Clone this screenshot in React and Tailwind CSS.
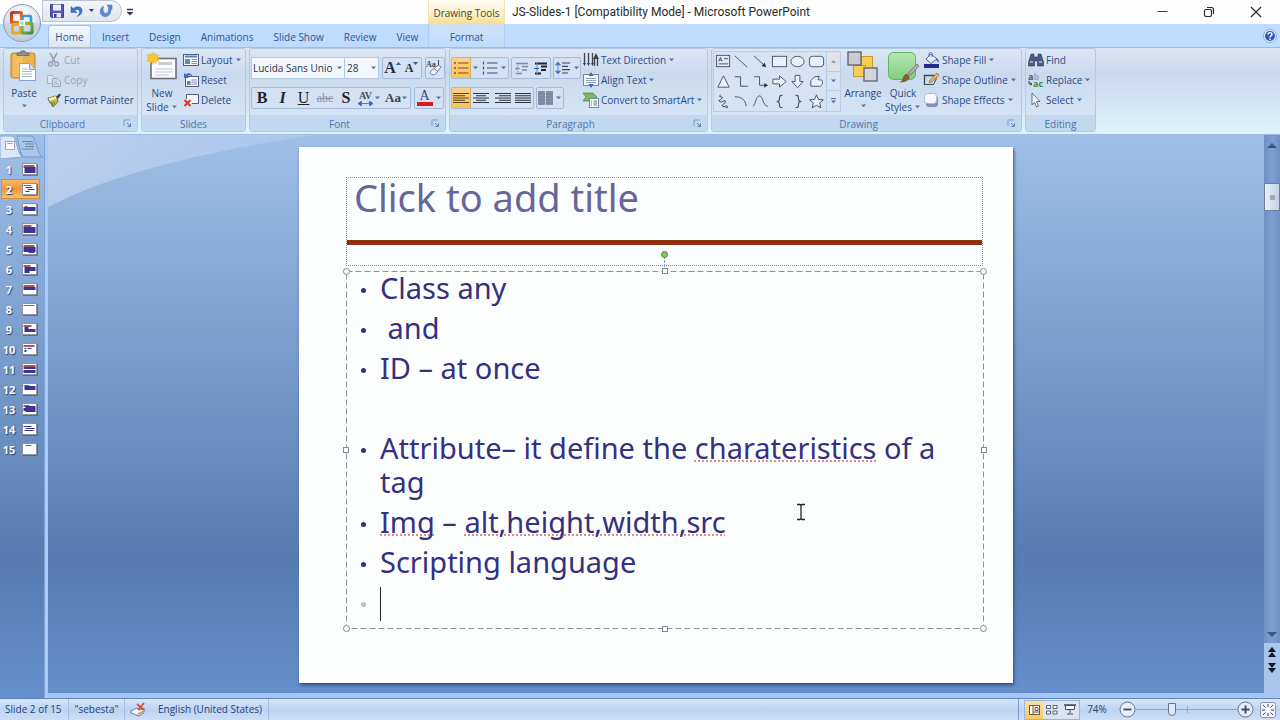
import React from "react";

/* ---------- small shared pieces ---------- */

function Caret({ className = "" }) {
  return (
    <svg width="7" height="4" viewBox="0 0 7 4" className={"shrink-0 " + className} aria-hidden="true">
      <path d="M1 .5h5L3.500 3.200z" fill="#5472a0" />
    </svg>
  );
}

function Launcher({ label }) {
  return (
    <button aria-label={label} className="mr-1 flex h-3 w-3 items-center justify-center">
      <svg width="9" height="9" viewBox="0 0 9 9" fill="none" aria-hidden="true">
        <path d="M1 7V1h6" stroke="#7f9cc4" />
        <path d="M4 4l3 3M7.500 4.500v3h-3" stroke="#5f7fae" />
      </svg>
    </button>
  );
}

function Group({ title, launcher, className, children }) {
  return (
    <section
      aria-label={title}
      className={
        "flex shrink-0 flex-col overflow-hidden rounded-[3px] border border-[#b3cae6] bg-linear-to-b from-[#dde7f4] via-[#c9daee] via-30% to-[#d8e8f8] " +
        className
      }
    >
      <div className="flex flex-1">{children}</div>
      <div className="flex h-4 items-center bg-[#c1d8f0]">
        <h2 className="flex-1 pt-[2px] text-center text-[10px] leading-[14px] text-[#5274a8]">{title}</h2>
        {launcher && <Launcher label={title + " options"} />}
      </div>
    </section>
  );
}

function Cmd({ icon, label, caret, disabled }) {
  return (
    <button
      disabled={disabled}
      className={
        "flex h-5 items-center gap-[2px] text-[10px] leading-none whitespace-nowrap " +
        (disabled ? "text-[#9aa5b5]" : "text-[#2b4a86]")
      }
    >
      {icon}
      <span>{label}</span>
      {caret && <Caret />}
    </button>
  );
}

function Box({ className = "", children }) {
  return (
    <div className={"flex h-[22px] items-stretch overflow-hidden rounded-[2px] border border-[#a4bbdc] bg-[#d3e1f2] " + className}>
      {children}
    </div>
  );
}

function Tool({ label, active, className = "", children }) {
  return (
    <button
      aria-label={label}
      className={
        "flex items-center justify-center " +
        (active ? "bg-linear-to-b from-[#fbd08b] to-[#fbc253] ring-1 ring-[#d3a95a] " : "") +
        className
      }
    >
      {children}
    </button>
  );
}

function Svg({ w = 16, h = 16, vb, children }) {
  return (
    <svg width={w} height={h} viewBox={vb || `0 0 ${w} ${h}`} fill="none" className="shrink-0" aria-hidden="true">
      {children}
    </svg>
  );
}

/* ---------- icons ---------- */

const OfficeLogo = () => (
  <Svg w={40} h={40}>
    <defs>
      <radialGradient id="orb" cx=".5" cy=".3" r=".75">
        <stop offset="0" stopColor="#ffffff" />
        <stop offset=".55" stopColor="#dfe5ee" />
        <stop offset="1" stopColor="#aab8cc" />
      </radialGradient>
      <linearGradient id="lr" x1="0" y1="0" x2="1" y2="1">
        <stop offset="0" stopColor="#c8321c" />
        <stop offset="1" stopColor="#f08a2a" />
      </linearGradient>
      <linearGradient id="lg" x1="0" y1="0" x2="1" y2="1">
        <stop offset="0" stopColor="#a9c43a" />
        <stop offset="1" stopColor="#3f8f35" />
      </linearGradient>
    </defs>
    <circle cx="20" cy="20" r="18.500" fill="url(#orb)" stroke="#8d9db5" />
    <path d="M3 21a17 17 0 0 0 34 0c-8-4-26-4-34 0z" fill="#c3cfe0" opacity=".7" />
    <rect x="9.500" y="9.500" width="10" height="10" rx="1" stroke="url(#lr)" strokeWidth="3.200" />
    <rect x="20.500" y="13" width="8.500" height="7.500" rx="1" stroke="#3b9bd8" strokeWidth="2.600" />
    <rect x="10.500" y="21.500" width="8" height="8.500" rx="1" stroke="#efa61f" strokeWidth="2.800" />
    <rect x="20" y="20.500" width="10" height="9.500" rx="1" stroke="url(#lg)" strokeWidth="3" />
    <path d="M17 17h6v6h-6z" fill="#eef6fb" />
    <path d="M18 20h4M20 18v4" stroke="#8fc4e6" />
  </Svg>
);

const SaveIcon = () => (
  <Svg w={16} h={16}>
    <path d="M1.500 1.500h13v13h-12l-1-1z" fill="#5a58b4" stroke="#403f92" />
    <rect x="4" y="1.500" width="8" height="6" fill="#eef1fb" />
    <rect x="4" y="10" width="8" height="4.500" fill="#dfe3f2" />
    <rect x="5" y="11" width="2.500" height="3.500" fill="#403f92" />
  </Svg>
);

const UndoIcon = () => (
  <Svg w={14} h={14}>
    <path d="M1 2.500v6h6l-2-2c2-2 5-1 4.500 2-.2 1.500-1 2.500-2.500 4 4-1.500 5.500-4 5-6.500C11.500 2.500 7 1.500 3.200 4.600z" fill="#4472cf" stroke="#2f57ab" strokeWidth=".5" />
  </Svg>
);

const RedoIcon = () => (
  <Svg w={14} h={14}>
    <path d="M8 1h5v5l-1.600-1.400C12.600 8 11 12 7 12.500 2.500 13 .5 9 1.500 5.500c.6-1.600 1.500-2.500 3-3.300C3.500 6 4 9.300 6.800 9.300c2.500 0 3.200-3 2.600-6.400z" fill="#5b8ad8" stroke="#3563b8" strokeWidth=".5" />
  </Svg>
);

const PasteIcon = () => (
  <Svg w={28} h={32}>
    <rect x="1" y="3" width="24" height="25" rx="2" fill="#eeb24c" stroke="#b98332" />
    <path d="M3 5h10v22H3z" fill="#f5c871" opacity=".6" />
    <path d="M7 5V3h3c0-3 6-3 6 0h3v2.500H7z" fill="#8b8f97" stroke="#5d6069" strokeWidth=".7" />
    <path d="M9.500 13.500h10l6 6v11h-16z" fill="#fbfcff" stroke="#8fa3c8" />
    <path d="M19.500 13.500v6h6" fill="#d5dff0" stroke="#8fa3c8" />
    <path d="M12 19h6M12 21.500h10M12 24h10M12 26.500h10" stroke="#a8b6d0" />
  </Svg>
);

const CutIcon = () => (
  <Svg>
    <path d="M4 1l5 9M11 1L6 10" stroke="#9aa5b4" strokeWidth="1.600" />
    <circle cx="4.500" cy="12" r="2" stroke="#9aa5b4" strokeWidth="1.400" />
    <circle cx="10.500" cy="12" r="2" stroke="#9aa5b4" strokeWidth="1.400" />
  </Svg>
);

const CopyIcon = () => (
  <Svg>
    <path d="M1.500 3.500h5l2 2v6h-7z" fill="#dde4ee" stroke="#a9b4c6" />
    <path d="M6.500 6.500h5l3 3v5h-8z" fill="#d3dbe8" stroke="#9ca9be" />
    <path d="M8 10h3M8 12h5" stroke="#a9b4c6" />
  </Svg>
);

const PainterIcon = () => (
  <Svg>
    <path d="M2 6l8-2 2 5c-2 4-4 5-5 6-1-3-4-4-5-9z" fill="#b9bf4a" stroke="#6d6f2e" />
    <path d="M2.500 6.200L10 4l.8 2.400L4 9z" fill="#f4efb0" />
    <path d="M10 5l3.500-3.500 1.500 1.200L11.800 7z" fill="#3e4046" />
    <path d="M5.500 10l1.500 4M8 9.500l.5 3" stroke="#6d6f2e" />
  </Svg>
);

const Burst = () => <path d="M6 0l1 3 2-2 .2 2.600L12 3l-2 2.200 2.500.8L10 7l2 2.500-2.800-.6L9 12 7 9.500 6 12.500 5 9.500 3 12V9L0 9.500 2 7-.5 6 2 5 0 2.500l3 .8L3 1l2 2z" fill="#f7c92d" stroke="#e3a917" strokeWidth=".4" />;

const NewSlideIcon = () => (
  <Svg w={30} h={30}>
    <rect x="4" y="6.500" width="25" height="20" fill="#fdfdff" stroke="#6a6f7c" strokeWidth="1.600" />
    <rect x="11" y="10" width="14" height="3" fill="#c9cdd6" />
    <path d="M8 17h18M8 20h18M8 23h14" stroke="#c0c6d4" />
    <Burst />
  </Svg>
);

const LayoutIcon = () => (
  <Svg>
    <rect x=".5" y="2.500" width="15" height="11" fill="#f6f9ff" stroke="#4f5f80" />
    <path d="M2 4.500h12" stroke="#5a7fb9" strokeWidth="2" />
    <rect x="2" y="7" width="5" height="5" fill="#6b86b5" />
    <path d="M8.500 7.500H14M8.500 9.500H14M8.500 11.500H14" stroke="#8494b4" />
  </Svg>
);

const ResetIcon = () => (
  <Svg>
    <rect x="2.500" y="4.500" width="13" height="10" fill="#f6f9ff" stroke="#4f5f80" />
    <path d="M8.500 8H14M8.500 10H14M8.500 12H14" stroke="#8494b4" />
    <rect x="4" y="9" width="3.500" height="4" fill="#6b86b5" />
    <path d="M1 6V1l1.800 1.500C5 0 9 1 9.500 5 7.500 2.500 5.500 3 4.200 4.200L6 6z" fill="#3c67c4" />
  </Svg>
);

const DeleteIcon = () => (
  <Svg>
    <path d="M3.500 7V2.500h12v9H9" fill="#f3f6fc" stroke="#4f5f80" />
    <path d="M1.500 8l6 6M7.500 8l-6 6" stroke="#d93a27" strokeWidth="2" />
  </Svg>
);

const ClearFormatIcon = () => (
  <Svg w={18} h={18}>
    <text x="0" y="8" fontSize="8" fontFamily="Liberation Serif, serif" fontWeight="bold" fill="#454b5c">Aa</text>
    <path d="M12.500 1v8" stroke="#454b5c" />
    <path d="M5 12l6-5c1.500-1 3 0 4 1l-5.500 7c-1.500 1-3.500 1-4.500 0-1-.800-1-2 0-3z" fill="#f4f6fb" stroke="#6c7c9b" />
    <path d="M8 9.500l4 3" stroke="#6c7c9b" />
  </Svg>
);

const Lines = ({ rows, color = "#2c3342" }) => (
  <Svg w={16} h={12}>
    {rows.map(([x, w], i) => (
      <path key={i} d={`M${x} ${1.5 + i * 2.25}h${w}`} stroke={color} strokeWidth="1.200" />
    ))}
  </Svg>
);

const BulletsIcon = ({ numbered }) => (
  <Svg w={16} h={14}>
    {[2, 7, 12].map((y) => (
      <g key={y}>
        {numbered ? <path d={`M1.500 ${y - 1.5}v3`} stroke="#35579b" strokeWidth="1.200" /> : <circle cx="2" cy={y} r="1.200" fill="#b2702a" />}
        <path d={`M5 ${y}h10.500`} stroke={numbered ? "#3f4d69" : "#73501f"} strokeWidth="1.200" />
      </g>
    ))}
  </Svg>
);

const IndentIcon = ({ strong }) => (
  <Svg w={15} h={13}>
    <path d="M2 1.500h12M2 11.500h6M8 4.500h6M8 8h5" stroke={strong ? "#1e2430" : "#7c89a3"} strokeWidth={strong ? 2 : 1.4} />
    <path d={strong ? "M1 6.500h4M3.500 4.500l2 2-2 2" : "M6 6.500H2M3.500 4.500l-2 2 2 2"} stroke={strong ? "#2c5bb5" : "#7c9ad0"} />
    <path d="M4 1v11" stroke="#8d9bb5" strokeDasharray="1 1" />
  </Svg>
);

const SpacingIcon = () => (
  <Svg w={16} h={14}>
    <path d="M3 1L.5 4h5zM3 13L.5 10h5zM3 3v8" fill="#4a77c8" stroke="#4a77c8" strokeWidth=".8" />
    <path d="M7 2h8M7 5.300h6M7 8.600h8M7 12h6" stroke="#3c4659" strokeWidth="1.200" />
  </Svg>
);

const ColumnsIcon = () => (
  <Svg w={15} h={14}>
    <path d="M0 0h7v14H0zM8 0h7v14H8z" fill="#8390a6" />
    <path d="M0 3h15M0 6h15M0 9h15M0 12h15" stroke="#6d7a92" strokeWidth=".6" />
  </Svg>
);

const TextDirIcon = () => (
  <Svg>
    <path d="M1.500 1v11M5.500 1v11M9.500 1v11" stroke="#3d4452" strokeWidth="1.300" />
    <path d="M0 11h3l-1.500 3zM4 11h3l-1.500 3zM8 11h3l-1.500 3z" fill="#3d4452" />
    <path d="M13 1l-3 6h6z" fill="#3d4452" />
    <path d="M11.500 7v7M14.500 7v7" stroke="#3d4452" strokeWidth="1.300" />
  </Svg>
);

const AlignTextIcon = () => (
  <Svg>
    <rect x=".5" y="2.500" width="15" height="11" fill="#f4f8ff" stroke="#7688aa" />
    <path d="M3 6.500h10M3 8.500h10M3 10.500h10" stroke="#8f9dba" />
    <path d="M8 0l2.500 4h-5zM8 16l2.500-4h-5z" fill="#3f6ab8" />
  </Svg>
);

const SmartArtIcon = () => (
  <Svg>
    <path d="M0 1h10l4 4-4 4H0l3-4z" fill="#7fb660" stroke="#568d3a" strokeWidth=".8" />
    <rect x="6.500" y="6.500" width="9" height="9" fill="#f4f8ff" stroke="#7688aa" />
    <path d="M8 9h1M8 11h1M8 13h1M10.500 9H14M10.500 11H14M10.500 13H14" stroke="#5b8a45" />
  </Svg>
);

const shapeDrawings = [
  ["Text box", <g key="a"><rect x="1.500" y="2.500" width="14" height="12" fill="#dfe9f6" stroke="#4a5366" /><path d="M4 9l1.800-4.500L7.600 9M4.600 7.500h2.400M9.500 6H14M4 11.500h10" stroke="#4a5366" /></g>],
  ["Line", <path key="b" d="M2 3l13 12" stroke="#4a5366" />],
  ["Arrow", <g key="c"><path d="M2 3l11 10" stroke="#4a5366" /><path d="M15 15l-5-1.200 3.500-3.800z" fill="#2f3747" /></g>],
  ["Rectangle", <rect key="d" x="1.500" y="3.500" width="15" height="11" fill="#e8f1fa" stroke="#4a5366" />],
  ["Ellipse", <ellipse key="e" cx="9" cy="9" rx="7" ry="5.500" fill="#e8f1fa" stroke="#4a5366" />],
  ["Rounded rectangle", <rect key="f" x="1.500" y="3.500" width="15" height="11" rx="3" fill="#e8f1fa" stroke="#4a5366" />],
  ["Triangle", <path key="g" d="M9 3l6 12H3z" fill="#eaf2fb" stroke="#4a5366" />],
  ["Elbow", <path key="h" d="M2 4h6v10h8" stroke="#4a5366" />],
  ["Elbow arrow", <g key="i"><path d="M2 4h6v9h6" stroke="#4a5366" /><path d="M17 13l-4-2.500v5z" fill="#2f3747" /></g>],
  ["Right arrow", <path key="j" d="M2 6.500h7V3l7 6-7 6v-3.500H2z" fill="#eaf2fb" stroke="#4a5366" />],
  ["Down arrow", <path key="k" d="M6.500 2.500V9H3l6 6.500L15 9h-3.500V2.500z" fill="#eaf2fb" stroke="#4a5366" />],
  ["Freeform", <path key="l" d="M3 14V8l4-4 5-.5-1.500 3.500 4 .5c2 2 .5 6-2 6.500z" fill="#eaf2fb" stroke="#4a5366" />],
  ["Scribble", <path key="m" d="M6 2c-4 3 4 1 1 4s-4 1-2 3 6-3 6 0-5 3-3 5 4-2 5 0-1 2-2 1" stroke="#2f3747" />],
  ["Arc", <path key="n" d="M2 4c7 0 11 3 12 10" stroke="#4a5366" />],
  ["Curve", <path key="o" d="M1 14C4 12 4 3 8 3s3 11 9 11" stroke="#4a5366" />],
  ["Left brace", <path key="p" d="M12 2.500c-3.500 0-3 1.500-3 3.500s-.5 3-3 3c2.500 0 3 1 3 3s-.5 3.500 3 3.500" stroke="#4a5366" strokeWidth="1.200" />],
  ["Right brace", <path key="q" d="M7 2.500c3.500 0 3 1.500 3 3.500s.5 3 3 3c-2.500 0-3 1-3 3s.5 3.500-3 3.500" stroke="#4a5366" strokeWidth="1.200" />],
  ["Star", <path key="r" d="M9 2l2 4.800 5.300.4-4 3.400 1.300 5.200L9 13l-4.600 2.800 1.300-5.200-4-3.400L7 6.800z" fill="#eaf2fb" stroke="#4a5366" />],
];

const ArrangeIcon = () => (
  <Svg w={32} h={32}>
    <rect x="14.500" y="5.500" width="11" height="12" fill="#f7cd52" stroke="#c99a2b" />
    <rect x="6.500" y="14.500" width="12" height="11" fill="#f7cd52" stroke="#c99a2b" />
    <rect x="1" y="1" width="13" height="13" fill="#c9ccd1" stroke="#63676f" strokeWidth="1.400" />
    <rect x="17" y="17" width="13" height="13" fill="#d3d5d9" stroke="#63676f" strokeWidth="1.400" />
  </Svg>
);

const QuickStylesIcon = () => (
  <Svg w={32} h={32}>
    <defs>
      <linearGradient id="qs" x1="0" y1="0" x2="0" y2="1">
        <stop offset="0" stopColor="#b8e6b4" />
        <stop offset="1" stopColor="#7ed07f" />
      </linearGradient>
    </defs>
    <rect x="1.500" y="1.500" width="27" height="27" rx="5" fill="url(#qs)" stroke="#62b068" />
    <path d="M21 22l9-9 2 2-8 9z" fill="#a9adb8" stroke="#71553f" strokeWidth=".6" />
    <path d="M12 31c4 0 3-5 6-7.500 2-1.500 5 .5 4.500 3C22 30 17 32 12 31z" fill="#8b5c36" />
  </Svg>
);

const FillIcon = () => (
  <Svg w={17} h={16}>
    <path d="M3 7l5-5 6 5-6 4.500z" fill="#e7eefa" stroke="#54688f" />
    <path d="M6 5V2c0-2 3-2 3 0v3" stroke="#54688f" />
    <path d="M13 6c3 1 3 3 2.500 4.500C14 10 13 8 13 6z" fill="#3d6ac0" />
    <rect x="1" y="12" width="15" height="4" fill="#252a86" />
  </Svg>
);

const OutlineIcon = () => (
  <Svg w={17} h={16}>
    <path d="M1.500 13V3.500H12" stroke="#3d4557" strokeWidth="1.300" />
    <path d="M1.500 12.500h9l3-6" stroke="#3d4557" />
    <path d="M6 11l1-3 7-7 2 2-7 7z" fill="#edb558" stroke="#8a6736" strokeWidth=".7" />
    <path d="M1 15.500h15" stroke="#c8d3e3" />
  </Svg>
);

const EffectsIcon = () => (
  <Svg w={17} h={16}>
    <rect x="3" y="4" width="12" height="11" rx="3" fill="#7d93bd" />
    <rect x="1.500" y="1.500" width="12" height="10" rx="3" fill="#f5f9ff" stroke="#a8bbdc" />
  </Svg>
);

const FindIcon = () => (
  <Svg>
    <path d="M3 2h3v3h4V2h3l2.500 8v4H9.500V9h-3v5H.5v-4z" fill="#4a5a80" stroke="#2e3c5e" strokeWidth=".6" />
    <path d="M2 10h3M11 10h3" stroke="#b8c6e2" strokeWidth="1.500" />
  </Svg>
);

const ReplaceIcon = () => (
  <Svg>
    <text x="0" y="8" fontSize="9" fontWeight="bold" fontFamily="Open Sans, sans-serif" fill="#47526c">a<tspan fill="#9ba6bc">b</tspan></text>
    <text x="5" y="15" fontSize="9" fontWeight="bold" fontFamily="Open Sans, sans-serif" fill="#3f8a46">ac</text>
    <path d="M1 9v3h3M2.500 10.500L4 12l-1.500 1.500" stroke="#34405c" />
  </Svg>
);

const SelectIcon = () => (
  <Svg>
    <path d="M4 1l8 8.500H8.500l2 4.500-2 1-2-4.500L4 13z" fill="#fff" stroke="#5f6c86" />
  </Svg>
);

/* ---------- chrome ---------- */

function TitleBar() {
  return (
    <header className="flex h-6 shrink-0 bg-[#fefefe]">
      <div className="flex w-[428px] shrink-0 pl-[42px]">
        <div className="flex h-[22px] w-20 items-center rounded-r-full border border-[#b9c3d3] bg-linear-to-b from-[#f4f6fa] to-[#dfe5ee] pl-[6px]">
          <button aria-label="Save"><SaveIcon /></button>
          <button aria-label="Undo" className="ml-[5px]"><UndoIcon /></button>
          <button aria-label="Undo history" className="ml-1"><Svg w={7} h={4}><path d="M1 0h5L3.500 3z" fill="#333c52" /></Svg></button>
          <button aria-label="Redo" className="ml-1"><RedoIcon /></button>
        </div>
        <button aria-label="Customize Quick Access Toolbar" className="ml-1 flex items-center">
          <Svg w={8} h={8}><path d="M1 1.500h6" stroke="#2c3650" strokeWidth="1.500" /><path d="M0.500 4h7L4 7.500z" fill="#2c3650" /></Svg>
        </button>
      </div>
      <div className="flex w-[77px] shrink-0 items-center justify-center border-x border-[#f0e3b8] bg-linear-to-b from-[#fffdf5] via-[#fdf3cf] to-[#f8dd8a] pt-[2px] text-[10px] whitespace-nowrap text-[#4b4638]">
        Drawing Tools
      </div>
      <h1 className="flex-1 pl-[7px] font-['Roboto','Open_Sans',sans-serif] text-[12px] leading-[25px] whitespace-nowrap text-[#2a2a2a]">JS-Slides-1 [Compatibility Mode] - Microsoft PowerPoint</h1>
      <div className="flex items-center">
        <button aria-label="Minimize" className="flex w-[46px] justify-center"><Svg w={12} h={12}><path d="M.5 5.500h10" stroke="#3a3a3a" /></Svg></button>
        <button aria-label="Restore" className="flex w-[46px] justify-center">
          <Svg w={12} h={12}><rect x="1.500" y="3.500" width="7" height="7" rx="1.500" stroke="#2a2a2a" strokeWidth="1.200" /><path d="M4 1.500h4.500a2 2 0 0 1 2 2V8" stroke="#2a2a2a" strokeWidth="1.200" /></Svg>
        </button>
        <button aria-label="Close" className="flex w-[48px] justify-center"><Svg w={12} h={12}><path d="M1 1l10 10M11 1L1 11" stroke="#2a2a2a" strokeWidth="1.200" /></Svg></button>
      </div>
    </header>
  );
}

function Tabs() {
  const tabs = ["Insert", "Design", "Animations", "Slide Show", "Review", "View"];
  return (
    <nav className="flex h-[23px] shrink-0 bg-[#bfdbff] text-[10px] text-[#33528f]">
      <div className="flex w-[428px] shrink-0 pl-12">
        <button className="mt-px w-[43px] shrink-0 rounded-t-[3px] border border-b-0 border-[#a3c2ea] bg-linear-to-b from-[#f3f8fe] to-[#dce7f5] pt-px">Home</button>
        <div className="ml-px flex">
          {tabs.map((t) => (
            <button key={t} className="px-[10px] pt-[3px] whitespace-nowrap">{t}</button>
          ))}
        </div>
      </div>
      <button className="w-[77px] shrink-0 border-x border-[#b3cdf1] bg-linear-to-b from-[#cfe0f7] to-[#bfdbff] pt-[3px]">Format</button>
      <span className="flex-1" />
      <button aria-label="Help" className="mr-[3px] flex items-center">
        <Svg w={14} h={14}>
          <circle cx="7" cy="7" r="6.500" fill="#e8f0fb" stroke="#8fa8d4" />
          <circle cx="7" cy="7" r="5" fill="#2c5ac0" />
          <path d="M5 5.500c0-2.500 4-2.500 4 0 0 1.500-2 1.300-2 3M7 9.500V11" stroke="#fff" strokeWidth="1.400" />
        </Svg>
      </button>
    </nav>
  );
}

function Ribbon() {
  const bigLabel = "shrink-0 text-center text-[10px] leading-[14px] text-[#2b4a86]";
  return (
    <div className="flex h-[88px] shrink-0 gap-[3px] border-y border-[#9ebde6] bg-linear-to-b from-[#dbe6f4] via-[#c8d9ee] via-30% to-[#dff3fd] pr-1 pb-[2px] pl-[3px]">
      <Group title="Clipboard" launcher className="w-[135px]">
        <button className={"flex w-10 flex-col items-center " + bigLabel}>
          <span className="pt-px"><PasteIcon /></span>
          <span className="pt-1">Paste</span>
          <Caret className="mt-1" />
        </button>
        <div className="ml-[2px] pt-px">
          <Cmd icon={<CutIcon />} label="Cut" disabled />
          <Cmd icon={<CopyIcon />} label="Copy" disabled />
          <Cmd icon={<PainterIcon />} label="Format Painter" />
        </div>
      </Group>

      <Group title="Slides" className="w-[105px]">
        <button className={"flex w-10 flex-col items-center " + bigLabel}>
          <span className="pt-[3px]"><NewSlideIcon /></span>
          <span className="pt-1">New</span>
          <span className="flex items-center gap-[2px]">Slide <Caret /></span>
        </button>
        <div className="ml-px pt-px">
          <Cmd icon={<LayoutIcon />} label="Layout" caret />
          <Cmd icon={<ResetIcon />} label="Reset" />
          <Cmd icon={<DeleteIcon />} label="Delete" />
        </div>
      </Group>

      <Group title="Font" launcher className="w-[197px]">
        <div className="flex flex-col gap-2 pt-2 pl-px">
          <div className="flex gap-[3px]">
            <div className="flex h-[22px] border border-[#b5cae6] bg-[#f2f7fd]">
              <label className="flex w-[92px] items-center">
                <span className="sr-only">Font</span>
                <select className="w-[84px] appearance-none bg-transparent pl-px text-[10px] text-[#2d3546]">
                  <option>Lucida Sans Unio</option>
                </select>
                <Caret />
              </label>
              <label className="flex w-[34px] items-center border-l border-[#b5cae6]">
                <span className="sr-only">Font size</span>
                <select className="w-[25px] appearance-none bg-transparent pl-[2px] text-[10px] text-[#2d3546]">
                  <option>28</option>
                </select>
                <Caret />
              </label>
            </div>
            <Box>
              <Tool label="Grow font" className="w-[19px] font-['Liberation_Serif',serif] text-[16px] font-bold text-[#2b3140]">
                A<Svg w={5} h={12}><path d="M0 3h5L2.500 0z" fill="#3a5a97" /></Svg>
              </Tool>
              <Tool label="Shrink font" className="w-[19px] font-['Liberation_Serif',serif] text-[12px] font-bold text-[#2b3140]">
                A<Svg w={5} h={12}><path d="M0 0h5L2.500 3z" fill="#3a5a97" /></Svg>
              </Tool>
            </Box>
            <Box><Tool label="Clear formatting" className="w-[18px]"><ClearFormatIcon /></Tool></Box>
          </div>
          <div className="flex gap-[3px]">
            <Box className="font-['Liberation_Serif',serif] text-[16px] text-[#1e222b]">
              <Tool label="Bold" className="w-[20px] font-bold">B</Tool>
              <Tool label="Italic" className="w-[21px] font-bold italic">I</Tool>
              <Tool label="Underline" className="w-[21px] underline">U</Tool>
              <Tool label="Strikethrough" className="w-[22px] text-[12px] text-[#8b93a3] line-through">abc</Tool>
              <Tool label="Shadow" className="w-[20px] font-bold">S</Tool>
              <Tool label="Character spacing" className="w-[27px] gap-px">
                <span className="flex flex-col items-center text-[10px] leading-[10px] font-bold text-[#444d61]">
                  AV
                  <Svg w={15} h={5}><path d="M0 2.500L3.500 0v5zM15 2.500L11.500 0v5zM3 2.500h9" fill="#3e68b5" stroke="#3e68b5" strokeWidth=".8" /></Svg>
                </span>
                <Caret />
              </Tool>
              <Tool label="Change case" className="w-[27px] text-[13px] font-bold text-[#3b4252]">Aa<Caret /></Tool>
            </Box>
            <Box>
              <Tool label="Font color" className="w-[19px]">
                <span className="flex flex-col items-center font-['Liberation_Serif',serif] text-[14px] leading-[12px] text-[#2d4a86]">
                  A<span className="h-1 w-4 bg-[#dd1a1a]" />
                </span>
              </Tool>
              <Tool label="Font color options" className="w-[9px]"><Caret /></Tool>
            </Box>
          </div>
        </div>
      </Group>

      <Group title="Paragraph" launcher className="w-[259px]">
        <div className="flex flex-col gap-2 pt-2 pl-px">
          <div className="flex gap-[2px]">
            <Box>
              <Tool label="Bullets" active className="w-[18px]"><BulletsIcon /></Tool>
              <Tool label="Bullet options" className="w-[10px]"><Caret /></Tool>
              <Tool label="Numbering" className="w-[19px]"><BulletsIcon numbered /></Tool>
              <Tool label="Numbering options" className="w-[9px]"><Caret /></Tool>
            </Box>
            <Box>
              <Tool label="Decrease list level" className="w-[19px]"><IndentIcon /></Tool>
              <Tool label="Increase list level" className="w-[19px]"><IndentIcon strong /></Tool>
            </Box>
            <Box><Tool label="Line spacing" className="w-[26px] gap-[2px]"><SpacingIcon /><Caret /></Tool></Box>
          </div>
          <div className="flex gap-[2px]">
            <Box>
              <Tool label="Align left" active className="w-[18px]"><Lines color="#5b4218" rows={[[0, 16], [0, 12], [0, 16], [0, 12], [0, 16]]} /></Tool>
              <Tool label="Center" className="w-[22px]"><Lines rows={[[0, 16], [3, 10], [0, 16], [3, 10], [0, 16]]} /></Tool>
              <Tool label="Align right" className="w-[21px]"><Lines rows={[[0, 16], [4, 12], [0, 16], [4, 12], [0, 16]]} /></Tool>
              <Tool label="Justify" className="w-[20px]"><Lines rows={[[0, 16], [0, 16], [0, 16], [0, 16], [0, 16]]} /></Tool>
            </Box>
            <Box><Tool label="Columns" className="w-[26px] gap-[2px]"><ColumnsIcon /><Caret /></Tool></Box>
          </div>
        </div>
        <div className="ml-[2px] pt-px">
          <Cmd icon={<TextDirIcon />} label="Text Direction" caret />
          <Cmd icon={<AlignTextIcon />} label="Align Text" caret />
          <Cmd icon={<SmartArtIcon />} label="Convert to SmartArt" caret />
        </div>
      </Group>

      <Group title="Drawing" launcher className="w-[311px]">
        <div className="mt-[2px] ml-px flex h-[61px] shrink-0 border border-[#b9cde7] bg-[#d5e4f4]">
          <div className="grid w-[112px] grid-cols-6 grid-rows-3">
            {shapeDrawings.map(([name, drawing]) => (
              <button key={name} aria-label={name} className="flex items-center justify-center">
                <Svg w={17} h={17} vb="0 0 18 18">{drawing}</Svg>
              </button>
            ))}
          </div>
          <div className="grid w-[14px] grid-rows-3 divide-y divide-[#b9cde7] border-l border-[#b9cde7]">
            <button aria-label="Previous shapes" className="flex items-center justify-center bg-[#e2e3e6]"><Svg w={5} h={3}><path d="M0 3h5L2.500 0z" fill="#9a9da5" /></Svg></button>
            <button aria-label="Next shapes" className="flex items-center justify-center"><Caret /></button>
            <button aria-label="More shapes" className="flex flex-col items-center justify-center gap-px"><span className="h-px w-[5px] bg-[#5472a0]" /><Caret /></button>
          </div>
        </div>
        <button className={"ml-px flex w-[42px] flex-col items-center " + bigLabel}>
          <span className="pt-[2px]"><ArrangeIcon /></span>
          <span className="pt-[3px]">Arrange</span>
          <Caret className="mt-1" />
        </button>
        <button className={"flex w-[38px] flex-col items-center " + bigLabel}>
          <span className="pt-[2px]"><QuickStylesIcon /></span>
          <span className="pt-[3px]">Quick</span>
          <span className="flex items-center gap-[2px]">Styles <Caret /></span>
        </button>
        <div className="ml-px pt-px">
          <Cmd icon={<FillIcon />} label="Shape Fill" caret />
          <Cmd icon={<OutlineIcon />} label="Shape Outline" caret />
          <Cmd icon={<EffectsIcon />} label="Shape Effects" caret />
        </div>
      </Group>

      <Group title="Editing" className="w-[71px]">
        <div className="ml-[2px] pt-px">
          <Cmd icon={<FindIcon />} label="Find" />
          <Cmd icon={<ReplaceIcon />} label="Replace" caret />
          <Cmd icon={<SelectIcon />} label="Select" caret />
        </div>
      </Group>
    </div>
  );
}

/* ---------- slide list ---------- */

const thumbs = [
  ["M2 2h11v3H2z", "M3 4h11v6H3z"],
  ["M2 2h8v1H2z", "M4 4h7v1H4zM6 6h7v1H6zM4 8h4v1H4z"],
  ["M3 3h3v1H3z", "M2 4h12v4H2z"],
  ["M2 2h8v2H2z", "M2 4h12v6H2z"],
  ["M2 2h11v2H2z", "M2 4h12v5H2zM7 9h6v1H7z"],
  ["M2 2h7v2H2z", "M3 4h11v4H3zM3 8h5v2H3z"],
  ["M2 2h11v2H2z", "M2 4h12v3H2z"],
  ["M2 2h11v1H2z", ""],
  ["M2 2h8v2H2z", "M3 4h4v2H3zM3 6h11v3H3z"],
  ["M2 2h11v2H2z", "M3 5h2v1H3zM6 5h4v1H6zM3 7h2v2H3z"],
  ["M2 2h12v4H2z", "M3 4h11v2H3zM2 7h12v3H2z"],
  ["M2 2h6v1H2z", "M3 3h11v4H3z"],
  ["M2 2h6v2H2z", "M4 3h10v6H4zM2 5h5v3H2z"],
  ["", "M2 3h8v1H2zM4 5h9v1H4zM3 7h9v1H3z"],
  ["M4 2h6v1H4z", ""],
];

function SlideList() {
  return (
    <aside className="flex w-11 shrink-0 flex-col">
      <div className="flex h-6">
        <Svg w={44} h={24}>
          <path d="M17 1h15c3 0 6 21 11 21H24C20 22 18 3 17 1z" fill="#a9c6ec" stroke="#7897c6" />
          <path d="M0 24V1h12c5 0 5 20 11 21z" fill="#dbe8f8" stroke="#8aa6d0" />
          <rect x="5.500" y="6.500" width="9" height="8" fill="#fff" stroke="#a0a6b2" />
          <path d="M7 8.500h6" stroke="#d7a17e" />
          <path d="M22 6.500h11M25 9h9M25 11.500h9M22 14h12" stroke="#7183a5" />
        </Svg>
      </div>
      <ol>
        {thumbs.map(([red, blue], i) => (
          <li key={i} className="px-[2px] py-px">
            <button
              aria-label={"Slide " + (i + 1)}
              className={
                "flex h-[18px] w-[37px] items-center justify-between pr-px " +
                (i === 1 ? "bg-linear-to-b from-[#f9b968] via-[#ef9532] to-[#f8c26a] ring-1 ring-[#d18d3a]" : "")
              }
            >
              <span className="w-[14px] text-center text-[11px] leading-none font-bold text-[#f5f9ff] [text-shadow:1px_1px_1px_#2b4474]">{i + 1}</span>
              <Svg w={16} h={13}>
                <rect x="1" y="1" width="15" height="12" fill="#35527f" opacity=".6" />
                <rect x=".5" y=".5" width="14" height="11" fill="#fdfdff" stroke="#8d93a3" />
                <g transform="translate(-.5 0)">
                  <path d={red} fill="#a65564" />
                  <path d={blue} fill="#3c3494" />
                </g>
              </Svg>
            </button>
          </li>
        ))}
      </ol>
    </aside>
  );
}

/* ---------- slide ---------- */

function Handle({ round, className }) {
  return <span className={"absolute border border-[#7d8a96] bg-white " + (round ? "h-[7px] w-[7px] rounded-full " : "h-[6px] w-[6px] ") + className} />;
}

function Bullet({ faded, children }) {
  return (
    <li className="flex pb-[6px]">
      <span className="flex h-[34px] w-[34px] shrink-0 items-center pt-1 pl-[15px]">
        <span className={"h-[5px] w-[5px] rounded-full " + (faded ? "bg-[#bcbfc9]" : "bg-[#33307f]")} />
      </span>
      <span className="min-h-[34px] whitespace-pre-wrap">{children}</span>
    </li>
  );
}

function Misspelt({ children }) {
  return <span className="underline decoration-[#e58a8e] decoration-dotted decoration-2 underline-offset-1 [text-decoration-skip-ink:none]">{children}</span>;
}

function Slide() {
  return (
    <article className="aspect-4/3 w-[714px] shrink-0 bg-[#fdfefe] pt-[30px] pr-[30px] pl-[47px] font-['Noto_Sans','Open_Sans',sans-serif] shadow-[1px_2px_3px_#2f4d80]">
      <div className="flex h-[89px] flex-col border border-dotted border-[#8b8b93] bg-[#fbfefe]">
        <h2 className="h-[62px] pl-[7px] text-[38px] leading-[38px] text-[#68659a]">Click to add title</h2>
        <div className="h-[5px] bg-[#8f2f0d]" />
      </div>
      <div className="relative mt-[5px] h-[357px] bg-[#fcfefe]">
        <ul className="pr-5 text-[29px] leading-[34px] text-[#35307f]">
          <Bullet>Class any</Bullet>
          <Bullet>{" and"}</Bullet>
          <Bullet>ID – at once</Bullet>
          <li className="h-10" />
          <Bullet>Attribute– it define the <Misspelt>charateristics</Misspelt> of a tag</Bullet>
          <Bullet><Misspelt>Img</Misspelt> – <Misspelt>alt,height,width,src</Misspelt></Bullet>
          <Bullet>Scripting language</Bullet>
          <Bullet faded><span className="mt-[2px] block h-[34px] w-px bg-[#20222c]" /></Bullet>
        </ul>
        <svg className="pointer-events-none absolute inset-0 h-full w-full overflow-visible" fill="none" aria-hidden="true">
          <rect x=".5" y=".5" width="100%" height="100%" stroke="#8b949e" strokeDasharray="6 3" />
          <path d="M318.500 -15v15" stroke="#7fa6bd" strokeDasharray="3 1" />
        </svg>
        <Handle round className="-top-[3px] -left-[3px]" />
        <Handle round className="-top-[3px] -right-[4px]" />
        <Handle round className="-bottom-[4px] -left-[3px]" />
        <Handle round className="-right-[4px] -bottom-[4px]" />
        <Handle className="-top-[3px] left-1/2 -ml-[3px]" />
        <Handle className="-bottom-[4px] left-1/2 -ml-[3px]" />
        <Handle className="top-1/2 -left-[3px] -mt-[3px]" />
        <Handle className="top-1/2 -right-[4px] -mt-[3px]" />
        <span className="absolute -top-[20px] left-1/2 -ml-[4px] h-[7px] w-[7px] rounded-full border border-[#4f8a35] bg-[#86c55c]" />
        <svg className="absolute top-[232px] left-[450px]" width="10" height="18" viewBox="0 0 10 18" fill="none" aria-hidden="true">
          <path d="M1 1.500h3l1 1 1-1h3M5 2.500v13M1 16.500h3l1-1 1 1h3" stroke="#20242c" strokeWidth="1.300" />
        </svg>
      </div>
    </article>
  );
}

function ScrollBar() {
  return (
    <div className="flex w-4 shrink-0 flex-col bg-[#a9c5ee]">
      <div className="flex flex-1 flex-col items-center bg-linear-to-r from-[#6f90c2] via-[#7b9fd0] to-[#6f90c2]">
        <button aria-label="Scroll up" className="pt-2 pb-[34px]"><Svg w={10} h={6}><path d="M0 5h10L5 0z" fill="#36557f" /></Svg></button>
        <button aria-label="Scroll position" className="flex h-7 w-4 items-center justify-center rounded-[1px] border border-[#6a7f9e] bg-linear-to-r from-[#e9eff8] to-[#c4cfdf]">
          <span className="h-[5px] w-[5px] bg-[#a2a9b8]" />
        </button>
        <button aria-label="Scroll down" className="mt-auto pb-[5px]"><Svg w={10} h={6}><path d="M0 0h10L5 5z" fill="#36557f" /></Svg></button>
      </div>
      <div className="flex h-[55px] flex-col items-center gap-[6px] pt-1">
        <button aria-label="Previous slide"><Svg w={8} h={10}><path d="M0 5h8L4 0zM0 10h8L4 5z" fill="#0f1522" /></Svg></button>
        <button aria-label="Next slide"><Svg w={8} h={10}><path d="M0 0h8L4 5zM0 5h8l-4 5z" fill="#0f1522" /></Svg></button>
      </div>
    </div>
  );
}

function StatusBar() {
  const view = "flex w-[18px] items-center justify-center";
  return (
    <footer className="flex h-[23px] shrink-0 items-stretch border-t border-[#5f83b8] bg-linear-to-b from-[#d6e5fa] via-[#bcd3f2] to-[#cfe0f6] text-[10px] whitespace-nowrap text-[#2a4377]">
      <span className="flex w-[69px] items-center border-r border-[#a5c0e4] pl-[5px]">Slide 2 of 15</span>
      <span className="flex w-14 items-center justify-center border-r border-[#a5c0e4]">"sebesta"</span>
      <button aria-label="Spelling check" className="flex w-[27px] items-center justify-center">
        <Svg w={17} h={16}>
          <path d="M1 9l6-3 3 2 4-1.500v4L9 14 1 11z" fill="#f6f8fc" stroke="#6679a3" />
          <path d="M7 2l7 6M14 1L8 8" stroke="#dd4a38" strokeWidth="1.800" />
          <path d="M8 12l6-3" stroke="#cf9b5c" strokeWidth="1.500" />
        </Svg>
      </button>
      <span className="flex items-center border-r border-[#a5c0e4] px-[6px]">English (United States)</span>
      <span className="flex-1 border-r border-[#7f9ecb]" />
      <div className="my-px ml-[5px] flex border border-[#9bb6db] bg-[#d9e3f2]">
        <button aria-label="Normal view" className={view + " bg-linear-to-b from-[#fbdf9f] to-[#f9c964]"}>
          <Svg w={11} h={10}><rect x=".5" y=".5" width="10" height="9" fill="#fff" stroke="#6b5a34" /><path d="M4 1v9M6 2.500h3v3H6zM4 7h6" stroke="#6b5a34" /></Svg>
        </button>
        <button aria-label="Slide sorter" className={view}>
          <Svg w={12} h={10}><path d="M.5.5h4v3h-4zM7 .5h4v3H7zM.5 6h4v3h-4zM7 6h4v3H7z" fill="#fff" stroke="#54627e" /></Svg>
        </button>
        <button aria-label="Slide show" className={view}>
          <Svg w={12} h={11}><path d="M0 1h12" stroke="#3f4c66" strokeWidth="1.500" /><path d="M1.500 1.500h9v4h-9zM6 6v3M3 10h6" fill="#fff" stroke="#3f4c66" /></Svg>
        </button>
      </div>
      <button className="ml-[5px] w-[24px]">74%</button>
      <button aria-label="Zoom out" className="ml-[10px]">
        <Svg w={17} h={17}><circle cx="8.500" cy="8.500" r="7.500" fill="#e6edf7" stroke="#66758f" /><path d="M4.500 8.500h8" stroke="#3a4864" strokeWidth="1.800" /></Svg>
      </button>
      <div className="relative flex w-[101px] items-center">
        <input
          type="range"
          min="10"
          max="196"
          defaultValue="74"
          aria-label="Zoom"
          className="h-4 w-full appearance-none bg-transparent [&::-webkit-slider-runnable-track]:h-px [&::-webkit-slider-runnable-track]:bg-[#8ba7cf] [&::-webkit-slider-thumb]:-mt-[6px] [&::-webkit-slider-thumb]:h-[13px] [&::-webkit-slider-thumb]:w-2 [&::-webkit-slider-thumb]:appearance-none [&::-webkit-slider-thumb]:rounded-b-[4px] [&::-webkit-slider-thumb]:border [&::-webkit-slider-thumb]:border-[#66758f] [&::-webkit-slider-thumb]:bg-[#dfe8f4]"
        />
        <span className="absolute left-[51px] h-[7px] w-px bg-[#8ba7cf]" />
      </div>
      <button aria-label="Zoom in">
        <Svg w={17} h={17}><circle cx="8.500" cy="8.500" r="7.500" fill="#e6edf7" stroke="#66758f" /><path d="M4.500 8.500h8M8.500 4.500v8" stroke="#3a4864" strokeWidth="1.800" /></Svg>
      </button>
      <button aria-label="Fit slide to window" className="mr-1 ml-[6px]">
        <Svg w={16} h={16}><rect x=".5" y=".5" width="15" height="15" rx="2" fill="#f2f6fc" stroke="#8393b0" /><path d="M8 2v3M8 11v3M2 8h3M11 8h3M3 3l2.500 2.500M13 3l-2.500 2.500M3 13l2.500-2.500M13 13l-2.500-2.500" stroke="#33415e" /></Svg>
      </button>
    </footer>
  );
}

export default function App() {
  return (
    <div className="relative flex min-h-screen flex-col overflow-hidden bg-[#bfdbff] font-['Open_Sans','Noto_Sans',sans-serif]">
      <TitleBar />
      <Tabs />
      <button aria-label="Office Button" className="absolute top-[3px] left-[2px]"><OfficeLogo /></button>
      <Ribbon />
      <div className="relative flex flex-1 bg-linear-to-b from-[#a0bfe8] via-[#567cb1] via-75% to-[#648fca]">
        <svg className="absolute top-0 left-0" width="320" height="72" viewBox="0 0 320 72" aria-hidden="true">
          <defs>
            <linearGradient id="sweep" x1="0" y1="0" x2="1" y2="0">
              <stop offset="0" stopColor="#c3d5ee" stopOpacity=".75" />
              <stop offset="1" stopColor="#b4cdf0" stopOpacity=".6" />
            </linearGradient>
          </defs>
          <path d="M48 0h265C200 17 110 40 48 72z" fill="url(#sweep)" />
        </svg>
        <div className="relative flex flex-1">
          <SlideList />
          <div className="w-1 shrink-0 border-l border-[#7fa3d6] bg-[#aacbf8]" />
          <main className="flex flex-1 flex-col">
            <div className="flex flex-1 justify-center pt-3 pb-[10px]"><Slide /></div>
            <div className="h-[5px] bg-[#a5c5f3]" />
          </main>
          <ScrollBar />
        </div>
      </div>
      <StatusBar />
    </div>
  );
}
